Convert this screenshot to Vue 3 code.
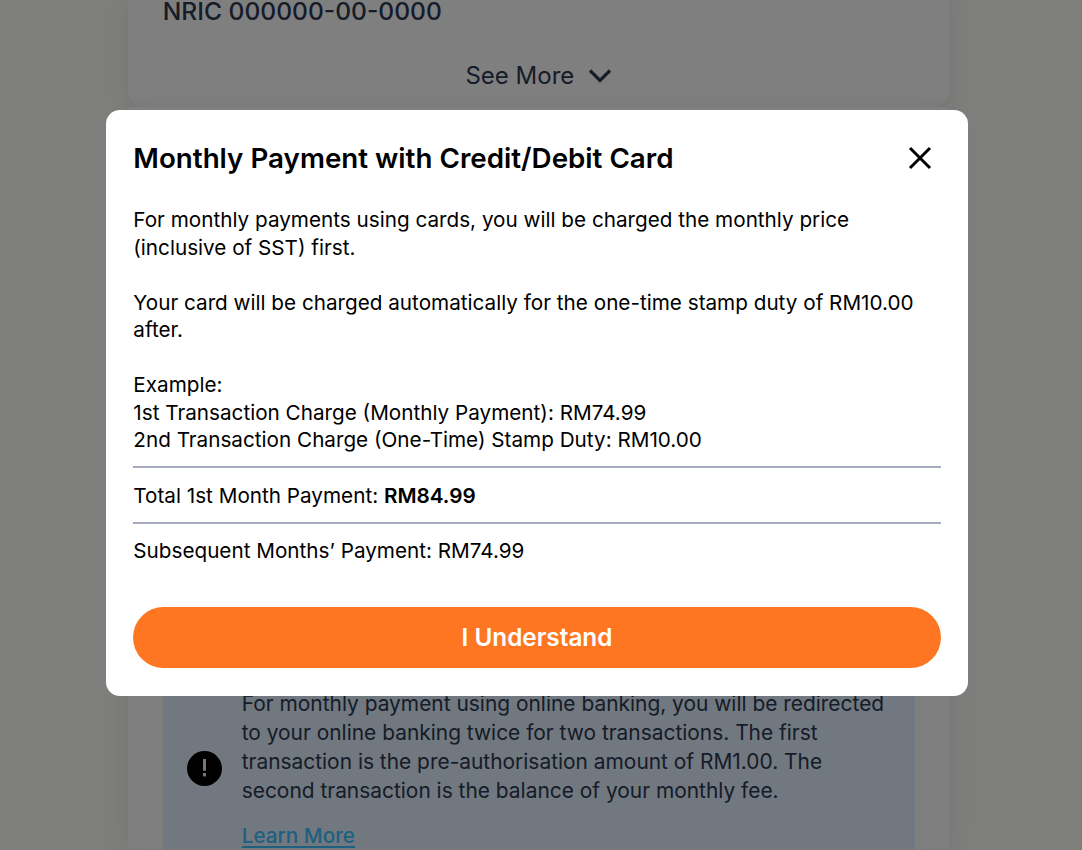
<template>
  <div class="page">
    <div class="card card--top">
      <div class="nric">NRIC 000000-00-0000</div>
      <div class="see-more">
        <span>See More</span>
        <svg width="24" height="24" viewBox="0 0 24 24" fill="none" stroke="#2c3850" stroke-width="3.2">
          <path d="M2 6.5 12 16.5 22 6.5" />
        </svg>
      </div>
    </div>

    <div class="card card--lower">
      <div class="info">
        <svg class="info-icon" width="35" height="35" viewBox="0 0 35 35">
          <circle cx="17.5" cy="17.5" r="17.5" fill="#000" />
          <rect x="16" y="8" width="3" height="11.7" fill="#e2f0ff" />
          <rect x="16" y="22" width="3" height="3.4" fill="#e2f0ff" />
        </svg>
        <div class="info-content">
          <p class="info-text">
            For monthly payment using online banking, you will be redirected to your online banking twice for two transactions. The first transaction is the pre-authorisation amount of RM1.00. The second transaction is the balance of your monthly fee.
          </p>
          <a class="learn-more">Learn More</a>
        </div>
      </div>
    </div>

    <div class="overlay"></div>

    <div class="modal">
      <div class="modal-head">
        <h2>Monthly Payment with Credit/Debit Card</h2>
        <svg class="close" width="24" height="24" viewBox="0 0 24 24" fill="none" stroke="#000" stroke-width="3">
          <path d="M2 2 22 22M22 2 2 22" />
        </svg>
      </div>
      <div class="modal-body">
        <p>For monthly payments using cards, you will be charged the monthly price (inclusive of SST) first.</p>
        <p>Your card will be charged automatically for the one-time stamp duty of RM10.00 after.</p>
        <p>
          Example:<br />
          1st Transaction Charge (Monthly Payment): RM74.99<br />
          2nd Transaction Charge (One-Time) Stamp Duty: RM10.00
        </p>
        <div class="row">Total 1st Month Payment: <b>RM84.99</b></div>
        <div class="row">Subsequent Months’ Payment: RM74.99</div>
      </div>
      <button class="understand">I Understand</button>
    </div>
  </div>
</template>

<script setup>
</script>

<style scoped>
.page {
  position: relative;
  width: 1082px;
  height: 850px;
  overflow: hidden;
  background: #fdfcf8;
  font-family: Inter, "Liberation Sans", sans-serif;
  color: #2c3850;
}

.card {
  width: 821px;
  margin-left: 128px;
  box-sizing: border-box;
  padding: 0 34px 0 34.7px;
  background: #fff;
  box-shadow: 0 0 24px rgba(0, 0, 0, 0.08);
}

.card--top {
  height: 108px;
  border-radius: 0 0 16px 16px;
}

.card--lower {
  height: 742px;
  padding-top: 540px;
}

.nric {
  font-size: 24.6px;
  font-weight: 500;
  line-height: 24px;
  margin-top: -1px;
}

.see-more {
  display: flex;
  justify-content: center;
  align-items: center;
  gap: 14px;
  margin-top: 41px;
  font-size: 24px;
  line-height: 24px;
}

.info {
  display: flex;
  align-items: center;
  gap: 20px;
  padding: 42px 24px 0;
  background: #e2f0ff;
  height: 202px;
  box-sizing: border-box;
}

.info-icon {
  flex: none;
  margin-top: -1px;
}

.info-text {
  margin: 0;
  font-size: 20.92px;
  line-height: 29px;
}

.learn-more {
  display: inline-block;
  margin-top: 16px;
  font-size: 20.73px;
  font-weight: 500;
  line-height: 29px;
  color: #3cc0ff;
  text-decoration: underline;
  text-decoration-thickness: 2px;
  text-underline-offset: 3px;
}

.overlay {
  position: absolute;
  inset: 0;
  background: rgba(0, 0, 0, 0.5);
}

.modal {
  position: absolute;
  left: 105.67px;
  top: 110px;
  width: 862.67px;
  height: 586px;
  box-sizing: border-box;
  padding: 27px 27.67px;
  background: #fff;
  border-radius: 14px;
  color: #000;
}

.modal-head {
  display: flex;
  justify-content: space-between;
  align-items: center;
  height: 41px;
}

.modal-head h2 {
  margin: 0;
  font-size: 27.76px;
  font-weight: 600;
}

.close {
  margin-right: 9px;
}

.modal-body {
  margin-top: 28px;
  font-size: 20.7px;
  line-height: 27.5px;
}

.modal-body p {
  margin: 0 0 27.5px;
}

.modal-body p:nth-child(3) {
  margin-bottom: 0;
}

.row {
  border-top: 2px solid #a6abbd;
  padding-top: 13.5px;
  margin-top: 12.5px;
}

.row b {
  font-weight: 600;
}

.understand {
  display: block;
  width: 100%;
  height: 61.7px;
  margin-top: 42px;
  border: none;
  border-radius: 31px;
  background: #ff7622;
  color: #fff;
  font-family: inherit;
  font-size: 24.3px;
  font-weight: 600;
}
</style>

<style>
body {
  overflow: hidden;
}
</style>
